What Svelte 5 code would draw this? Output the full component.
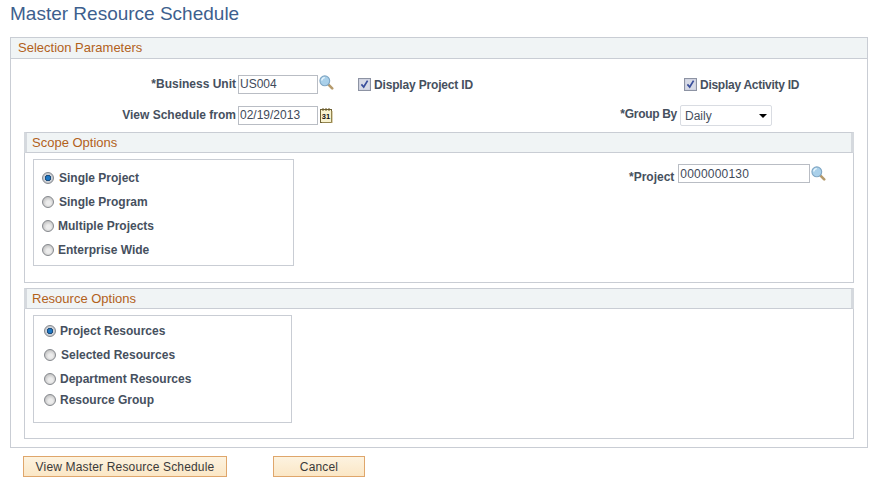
<script>
  const scope = [
    { label: 'Single Project', checked: true, top: 0, gap: 5 },
    { label: 'Single Program', checked: false, top: 0, gap: 5 },
    { label: 'Multiple Projects', checked: false, top: 0, gap: 4 },
    { label: 'Enterprise Wide', checked: false, top: 0, gap: 4 }
  ];
  const resource = [
    { label: 'Project Resources', checked: true, top: 0, gap: 4 },
    { label: 'Selected Resources', checked: false, top: 0, gap: 5 },
    { label: 'Department Resources', checked: false, top: 0, gap: 4 },
    { label: 'Resource Group', checked: false, top: -3, gap: 4 }
  ];
</script>

{#snippet lens()}
  <svg class="lens" width="15" height="15" viewBox="0 0 15 15" aria-hidden="true">
    <path d="M9 9.2l4.2 4.2" stroke="#b59a6c" stroke-width="2.6" stroke-linecap="round" />
    <circle cx="5.8" cy="5.8" r="4.9" fill="#a9d0ea" stroke="#7fa6c4" stroke-width="1.1" />
    <path d="M2.8 5.6a3 3 0 0 1 3-3" stroke="#e9f6fd" stroke-width="1.4" fill="none" />
  </svg>
{/snippet}

{#snippet check()}
  <span class="check">
    <svg width="13" height="13" viewBox="0 0 13 13" aria-hidden="true">
      <rect x=".5" y=".5" width="12" height="12" fill="#c8cbdd" stroke="#8d93a3" />
      <rect x="1.5" y="1.5" width="10" height="10" fill="#d8dbe6" />
      <path d="M3.4 6.4l2.3 2.6 3.9-6.4" stroke="#3a4f9c" stroke-width="1.7" fill="none" />
    </svg>
  </span>
{/snippet}

{#snippet radios(items, cls)}
  <div class="radios {cls}">
    {#each items as r}
      <div class="radio-row" style="margin-top: {r.top}px; column-gap: {r.gap}px">
        <span class="radio" class:on={r.checked}></span>
        <span class="radio-label">{r.label}</span>
      </div>
    {/each}
  </div>
{/snippet}

<div class="page">
  <h1>Master Resource Schedule</h1>

  <section class="outer">
    <header>Selection Parameters</header>
    <div class="fields">
      <span class="lbl right r1">*Business Unit</span>
      <div class="field r1">
        <span class="input w80">US004</span>
        {@render lens()}
      </div>
      <div class="checkfield r1">{@render check()}<span class="lbl tight">Display Project ID</span></div>
      <div class="checkfield r1 far">{@render check()}<span class="lbl tighter">Display Activity ID</span></div>

      <span class="lbl right r2">View Schedule from</span>
      <div class="field r2">
        <span class="input w80">02/19/2013</span>
        <svg class="cal" width="13" height="15" viewBox="0 0 13 15" aria-hidden="true">
          <rect x=".5" y="1.5" width="11" height="13" fill="#f8f2cf" stroke="#6f6234" />
          <path d="M12 3v12H2" stroke="#b9a76a" fill="none" />
          <path d="M3 0v3M6 0v3M9 0v3" stroke="#6b5a2a" />
          <text x="6" y="11" text-anchor="middle" font-size="7.5" font-weight="700" font-family="Liberation Sans, sans-serif" fill="#111">31</text>
        </svg>
      </div>
      <span class="lbl right r2 groupby">*Group By</span>
      <div class="select r2">
        <span>Daily</span>
        <i class="caret"></i>
      </div>
    </div>

    <section class="inner scope">
      <header>Scope Options</header>
      <div class="scope-body">
        <div class="box box-scope">{@render radios(scope, 'scope-radios')}</div>
        <div class="project">
          <span class="lbl">*Project</span>
          <span class="input w132">0000000130</span>
          {@render lens()}
        </div>
      </div>
    </section>

    <section class="inner res">
      <header>Resource Options</header>
      <div class="box box-res">{@render radios(resource, 'res-radios')}</div>
    </section>
  </section>

  <div class="actions">
    <button class="wide">View Master Resource Schedule</button>
    <button class="narrow">Cancel</button>
  </div>
</div>

<style>
  :global(body) {
    margin: 0;
    background: #fff;
  }
  .page {
    width: 895px;
    height: 491px;
    box-sizing: border-box;
    padding: 0 0 0 10px;
    font-family: "Liberation Sans", Arial, sans-serif;
    font-size: 12px;
    overflow: hidden;
  }
  h1 {
    margin: 0;
    padding-top: 3px;
    height: 37px;
    box-sizing: border-box;
    font-size: 19px;
    line-height: 22px;
    font-weight: 400;
    color: #3d5f8e;
  }
  .outer {
    box-sizing: border-box;
    width: 858px;
    height: 411px;
    border: 1px solid #c9cdd4;
    padding: 0;
  }
  header {
    box-sizing: border-box;
    height: 21px;
    background: #f0f4f5;
    border-bottom: 1px solid #c9cdd4;
    border-top: 1px solid #c9cdd4;
    padding-left: 7px;
    color: #b2611b;
    font-size: 13px;
    line-height: 19px;
  }
  .outer > header {
    border-top: 0;
    height: 21px;
    line-height: 19px;
  }
  .fields {
    display: grid;
    grid-template-columns: 227px 120px 322px 1fr;
    grid-template-rows: 36px 26px;
    align-items: center;
    height: 73px;
    padding-top: 7px;
    box-sizing: border-box;
  }
  .r1 { grid-row: 1; }
  .r2 { grid-row: 2; }
  .lbl {
    font-weight: 700;
    color: #46505e;
    font-size: 12px;
    white-space: nowrap;
  }
  .tight { letter-spacing: -0.17px; }
  .tighter { letter-spacing: -0.27px; }
  .right {
    text-align: right;
    padding-right: 2px;
  }
  .field {
    display: flex;
    align-items: center;
    gap: 1px;
  }
  .input {
    box-sizing: border-box;
    display: block;
    height: 19px;
    border: 1px solid #b9bdc4;
    color: #3f4a5a;
    font-size: 12px;
    line-height: 17px;
    padding-left: 1px;
    background: #fff;
  }
  .w80 { width: 80px; }
  .w132 {
    width: 132px;
    letter-spacing: .2px;
  }
  .lens { display: block; margin-top: -3px; }
  .cal { display: block; margin-left: 1px; }
  .checkfield {
    display: flex;
    align-items: center;
    gap: 3px;
  }
  .checkfield .lbl { padding-top: 2px; }
  .far { padding-left: 4px; }
  .check { display: block; height: 13px; }
  .check svg { display: block; }
  .groupby {
    grid-column: 3;
    padding-right: 3px;
    margin-top: -3px;
    letter-spacing: -0.3px;
  }
  .select {
    box-sizing: border-box;
    display: flex;
    align-items: center;
    justify-content: space-between;
    align-self: start;
    margin-top: 3px;
    width: 92px;
    height: 21px;
    border: 1px solid #d9dce2;
    border-radius: 2px;
    padding: 0 4px;
    color: #46505e;
    background: #fff;
  }
  .caret {
    width: 0;
    height: 0;
    border-left: 4px solid transparent;
    border-right: 4px solid transparent;
    border-top: 4px solid #000;
  }
  .inner {
    box-sizing: border-box;
    width: 830px;
    height: 151px;
    margin-left: 13px;
    border: 1px solid #c9cdd4;
    border-top: 0;
  }
  .inner header {
    margin: 0 -1px;
    border-left: 3px solid #d5d9de;
    border-right: 3px solid #d5d9de;
    padding-left: 5px;
  }
  .res {
    margin-top: 5px;
  }
  .scope-body {
    display: flex;
    align-items: flex-start;
  }
  .box {
    box-sizing: border-box;
    border: 1px solid #c9cdd4;
    margin: 6px 0 0 8px;
  }
  .box-scope { width: 261px; height: 107px; }
  .box-res { width: 259px; height: 108px; }
  .radios {
    padding-top: 6px;
  }
  .scope-radios { padding-left: 8px; }
  .res-radios { padding: 3px 0 0 10px; }
  .radio-row {
    display: flex;
    align-items: center;
    height: 24px;
  }
  .radio {
    box-sizing: border-box;
    display: block;
    width: 12px;
    height: 12px;
    border-radius: 50%;
    border: 1px solid #85888d;
    background: radial-gradient(circle at 55% 60%, #ececec 0 25%, #c6c6c6 70%, #aeaeae);
  }
  .radio.on {
    background: radial-gradient(circle at 50% 50%, #1f78c4 0 26%, #123e6b 40%, #cdd1d7 50%, #b8bcc2);
  }
  .radio-label {
    font-weight: 700;
    color: #46505e;
    white-space: nowrap;
  }
  .project {
    display: flex;
    align-items: flex-start;
    gap: 4px;
    margin: 11px 0 0 335px;
  }
  .project .lbl { padding-top: 6px; }
  .project .lens { margin: 2px 0 0 -3px; }
  .project .input { line-height: 18px; }
  .actions {
    display: flex;
    align-items: flex-start;
    padding: 8px 0 0 13px;
    gap: 46px;
  }
  button {
    box-sizing: border-box;
    height: 21px;
    border: 1px solid #dfa66b;
    border-radius: 0;
    background: linear-gradient(#fdf3e0, #fbe7c6);
    font-family: "Liberation Sans", Arial, sans-serif;
    font-size: 12px;
    color: #3a3a3a;
    padding: 0;
    letter-spacing: .17px;
  }
  .wide { width: 204px; }
  .narrow { width: 92px; }
</style>
